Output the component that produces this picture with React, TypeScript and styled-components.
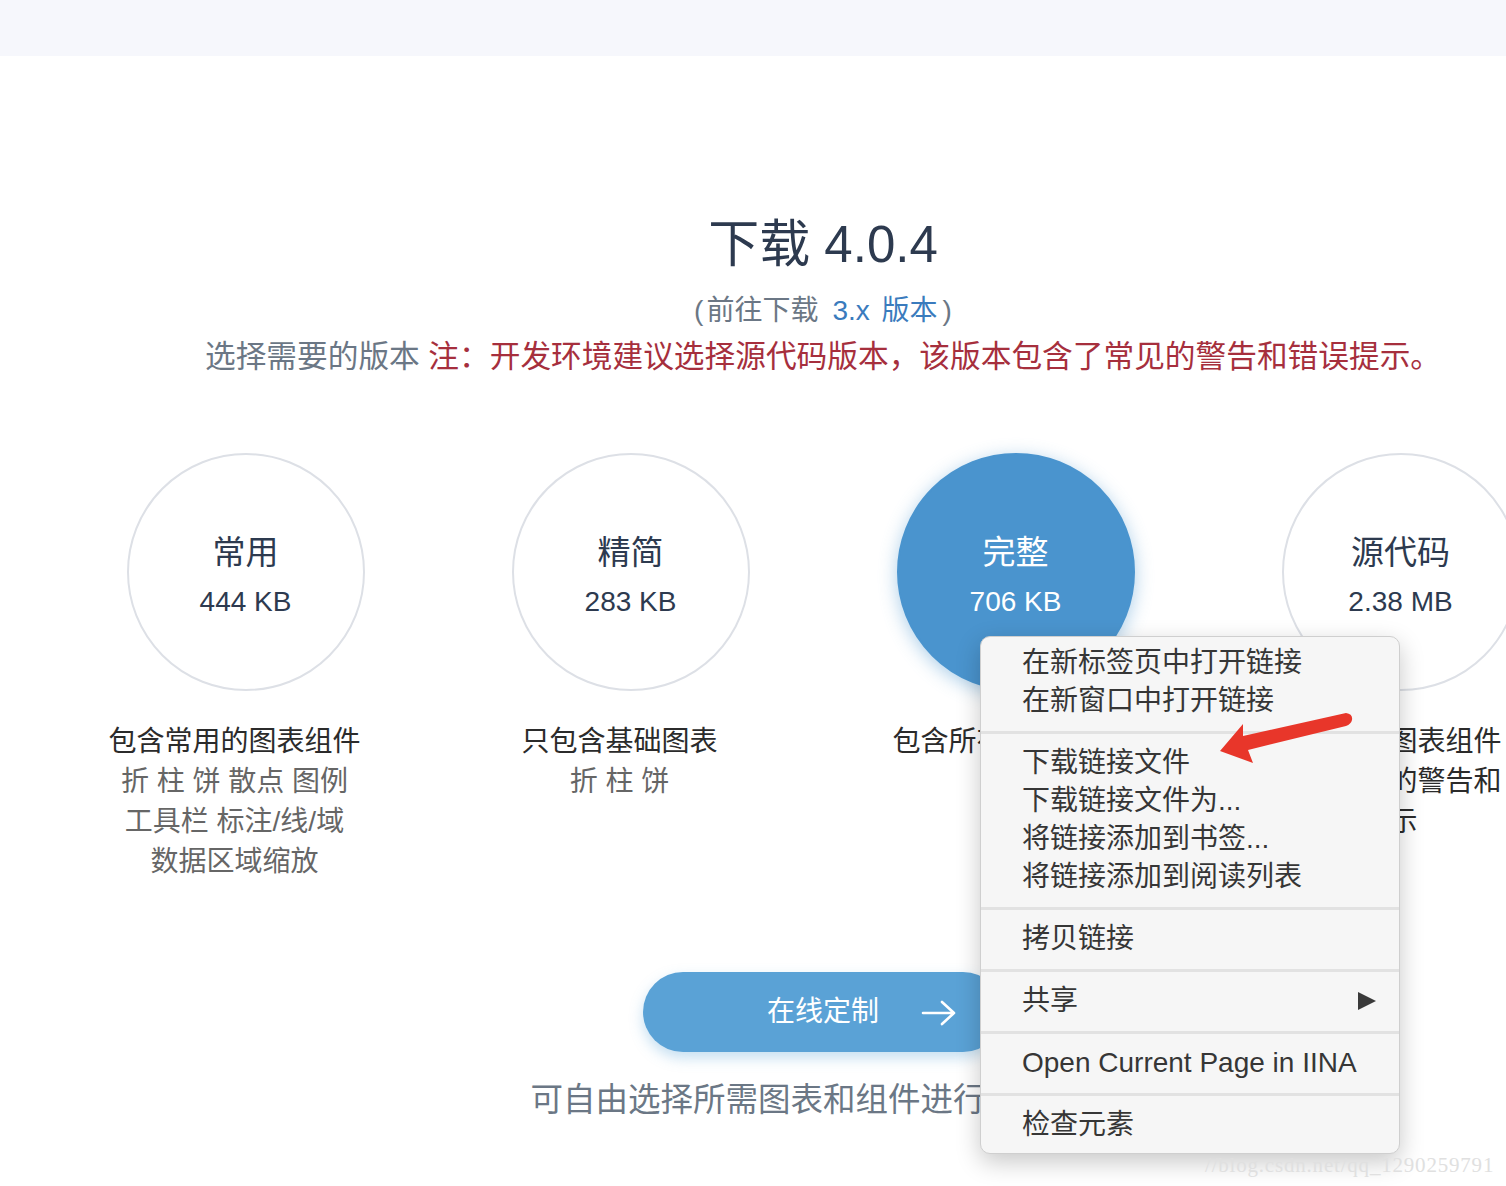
import React from "react";
import styled, { createGlobalStyle } from "styled-components";

const GlobalStyle = createGlobalStyle`
  html, body {
    margin: 0;
    padding: 0;
    background: #ffffff;
    overflow: hidden;
  }
  body {
    font-family: "Liberation Sans", "Noto Sans CJK SC", sans-serif;
  }
  * { box-sizing: border-box; }
`;

const Root = styled.div`
  position: relative;
  width: 1506px;
  height: 1186px;
  overflow: hidden;
  font-family: "Liberation Sans", "Noto Sans CJK SC", sans-serif;
`;

const TopBar = styled.div`
  height: 56px;
  background: #f6f7fc;
`;

const Content = styled.main`
  width: 1540px;
  margin-left: 53px;
  padding-top: 159px;
  display: flex;
  flex-direction: column;
  align-items: center;
`;

const Title = styled.h1`
  margin: 0;
  font-size: 51px;
  line-height: 60px;
  font-weight: 400;
  color: #2d3a4f;
`;

const SubTitle = styled.p`
  margin: 16px 0 0;
  font-size: 28px;
  line-height: 40px;
  color: #6b7785;
`;

const Paren = styled.span`
  margin: 0 3px;
`;

const Link = styled.a`
  color: #3a7bbd;
  text-decoration: none;
  margin: 0 2px 0 14px;
  word-spacing: 4px;
`;

const Notice = styled.p`
  margin: 6px 0 0;
  font-size: 30.7px;
  line-height: 40px;
  color: #6b7785;
  white-space: nowrap;
`;

const Warn = styled.span`
  color: #a62f3d;
`;

const Columns = styled.div`
  margin-top: 76px;
  display: grid;
  grid-template-columns: repeat(4, 385px);
`;

const Column = styled.div`
  display: flex;
  flex-direction: column;
  align-items: center;
`;

const Circle = styled.div<{ $active?: boolean }>`
  width: 238px;
  height: 238px;
  border-radius: 50%;
  border: 2px solid ${(p) => (p.$active ? "#4a94ce" : "#dde0e6")};
  background: ${(p) => (p.$active ? "#4a94ce" : "#ffffff")};
  box-shadow: ${(p) => (p.$active ? "0 4px 18px rgba(74, 148, 206, 0.45)" : "none")};
  color: ${(p) => (p.$active ? "#ffffff" : "#2d3a4f")};
  display: flex;
  flex-direction: column;
  align-items: center;
  justify-content: center;
  gap: 11px;
  padding-top: 9px;
`;

const CircleTitle = styled.div`
  font-size: 33px;
  line-height: 40px;
`;

const CircleSize = styled.div`
  font-size: 28px;
  line-height: 36px;
`;

const Desc = styled.div`
  margin-top: 31px;
  padding-right: 22px;
  text-align: center;
  font-size: 28px;
  line-height: 40px;
  white-space: nowrap;
`;

const DescLine = styled.div<{ $primary?: boolean }>`
  color: ${(p) => (p.$primary ? "#2b2b2b" : "#666666")};
`;

const CustomButton = styled.button`
  position: relative;
  margin-top: 90px;
  width: 360px;
  height: 80px;
  border: none;
  border-radius: 40px;
  background: #5aa2d6;
  box-shadow: 0 6px 14px rgba(90, 162, 214, 0.35);
  color: #ffffff;
  font-family: inherit;
  font-size: 28px;
  line-height: 80px;
  padding: 0;
  cursor: pointer;
`;

const ArrowIcon = styled.svg`
  position: absolute;
  right: 46px;
  top: 28px;
`;

const Footnote = styled.p`
  margin: 26px 0 0;
  font-size: 32.5px;
  line-height: 44px;
  color: #6b7785;
  white-space: nowrap;
`;

const Menu = styled.div`
  position: absolute;
  left: 980px;
  top: 636px;
  width: 420px;
  padding: 7px 0 9px;
  background: #f6f6f6;
  border: 1px solid #cfcfcf;
  border-radius: 10px;
  box-shadow: 0 8px 24px rgba(0, 0, 0, 0.22);
`;

const MenuItem = styled.div`
  position: relative;
  height: 38px;
  line-height: 38px;
  padding-left: 41px;
  font-size: 28px;
  color: #363636;
  white-space: nowrap;
`;

const Separator = styled.div`
  height: 3px;
  margin: 11px 0 10px;
  background: #e2e2e2;
`;

const SubmenuMark = styled.span`
  position: absolute;
  right: 23px;
  top: 10px;
  width: 0;
  height: 0;
  border-top: 9px solid transparent;
  border-bottom: 9px solid transparent;
  border-left: 18px solid #3a3a3a;
`;

const RedArrow = styled.svg`
  position: absolute;
  left: 0;
  top: 0;
  pointer-events: none;
`;

const Watermark = styled.div`
  position: absolute;
  left: 1205px;
  top: 1152px;
  font-family: "Liberation Serif", serif;
  font-size: 21px;
  line-height: 26px;
  letter-spacing: 0.8px;
  color: #e0e0e0;
  white-space: nowrap;
`;

type Line = { text: string; primary?: boolean };
type Pack = { title: string; size: string; active?: boolean; lines: Line[] };

const packs: Pack[] = [
  {
    title: "常用",
    size: "444 KB",
    lines: [
      { text: "包含常用的图表组件", primary: true },
      { text: "折 柱 饼 散点 图例" },
      { text: "工具栏 标注/线/域" },
      { text: "数据区域缩放" },
    ],
  },
  {
    title: "精简",
    size: "283 KB",
    lines: [{ text: "只包含基础图表", primary: true }, { text: "折 柱 饼" }],
  },
  {
    title: "完整",
    size: "706 KB",
    active: true,
    lines: [{ text: "包含所有图表组件", primary: true }],
  },
  {
    title: "源代码",
    size: "2.38 MB",
    lines: [
      { text: "包含所有图表组件", primary: true },
      { text: "包含常见的警告和", primary: true },
      { text: "提示", primary: true },
    ],
  },
];

type MenuGroup = { label: string; submenu?: boolean }[];

const menuGroups: MenuGroup[] = [
  [{ label: "在新标签页中打开链接" }, { label: "在新窗口中打开链接" }],
  [
    { label: "下载链接文件" },
    { label: "下载链接文件为..." },
    { label: "将链接添加到书签..." },
    { label: "将链接添加到阅读列表" },
  ],
  [{ label: "拷贝链接" }],
  [{ label: "共享", submenu: true }],
  [{ label: "Open Current Page in IINA" }],
  [{ label: "检查元素" }],
];

export default function App() {
  return (
    <Root>
      <GlobalStyle />
      <TopBar />
      <Content>
        <Title>下载 4.0.4</Title>
        <SubTitle>
          <Paren>(</Paren>前往下载<Link href="#">3.x 版本</Link>
          <Paren>)</Paren>
        </SubTitle>
        <Notice>
          选择需要的版本 <Warn>注：开发环境建议选择源代码版本，该版本包含了常见的警告和错误提示。</Warn>
        </Notice>
        <Columns>
          {packs.map((p) => (
            <Column key={p.title}>
              <Circle $active={p.active}>
                <CircleTitle>{p.title}</CircleTitle>
                <CircleSize>{p.size}</CircleSize>
              </Circle>
              <Desc>
                {p.lines.map((l, i) => (
                  <DescLine key={i} $primary={l.primary}>
                    {l.text}
                  </DescLine>
                ))}
              </Desc>
            </Column>
          ))}
        </Columns>
        <CustomButton>
          在线定制
          <ArrowIcon width="36" height="26" viewBox="0 0 36 26" fill="none">
            <path
              d="M2 13 H33 M21 2 L33 13 L21 24"
              stroke="#ffffff"
              strokeWidth="2.6"
              strokeLinecap="round"
              strokeLinejoin="round"
            />
          </ArrowIcon>
        </CustomButton>
        <Footnote>可自由选择所需图表和组件进行打包下载</Footnote>
      </Content>

      <Menu>
        {menuGroups.map((g, gi) => (
          <React.Fragment key={gi}>
            {gi > 0 && <Separator />}
            {g.map((item) => (
              <MenuItem key={item.label}>
                {item.label}
                {item.submenu && <SubmenuMark />}
              </MenuItem>
            ))}
          </React.Fragment>
        ))}
      </Menu>

      <RedArrow width="1506" height="1186" viewBox="0 0 1506 1186">
        <path
          d="M1220 751 L1243 724 L1243 736 L1346 713 Q1353 714 1352 720 Q1351 724 1346 726 L1248 750 L1253 763 Z"
          fill="#e8362a"
        />
      </RedArrow>

      <Watermark>//blog.csdn.net/qq_1290259791</Watermark>
    </Root>
  );
}
